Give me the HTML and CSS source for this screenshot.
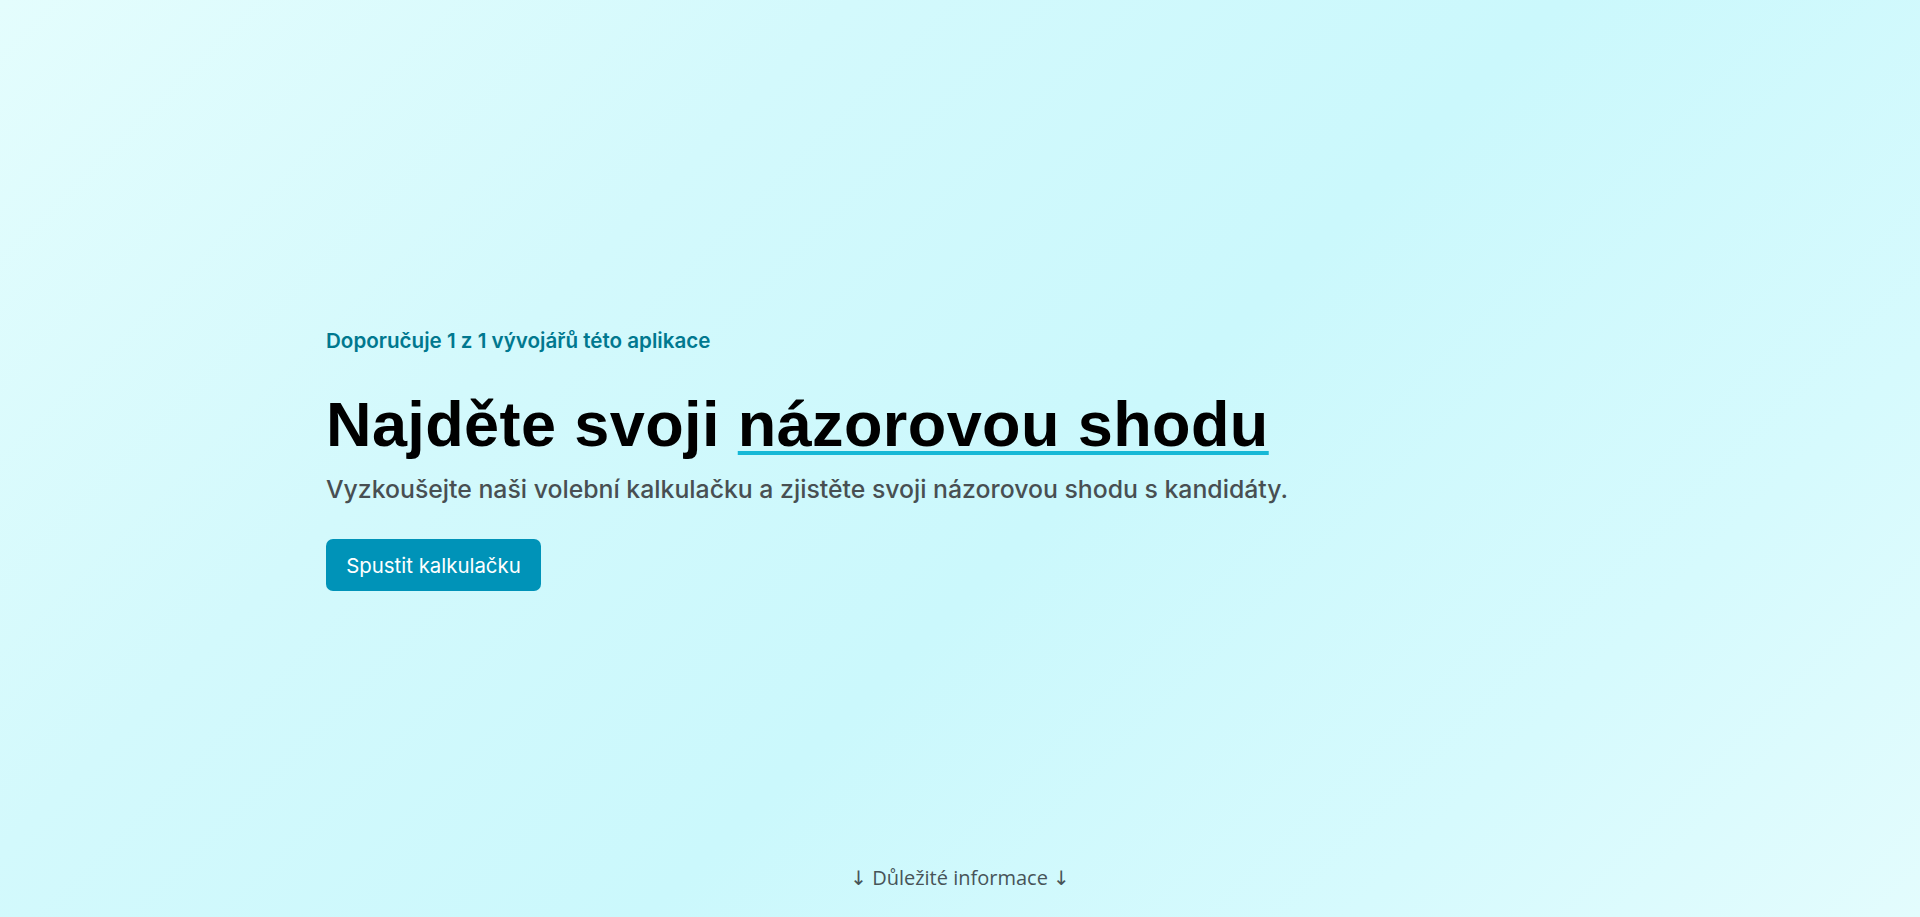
FILE: index.html
```html
<!DOCTYPE html>
<html lang="cs">
<head>
<meta charset="utf-8">
<title>Volební kalkulačka</title>
<link rel="stylesheet" href="styles.css">
</head>
<body>
<main class="page">
  <section class="hero">
    <p class="eyebrow">Doporučuje 1 z 1 vývojářů této aplikace</p>
    <h1 class="title">Najděte svoji <span class="mark">názorovou shodu</span></h1>
    <p class="lead">Vyzkoušejte naši volební kalkulačku a zjistěte svoji názorovou shodu s kandidáty.</p>
    <a class="btn" href="#">Spustit kalkulačku</a>
  </section>
  <footer class="more"><span class="arrow">↓</span> Důležité informace <span class="arrow">↓</span></footer>
</main>
</body>
</html>
```

FILE: styles.css
```css
* { box-sizing: border-box; }
html, body { margin: 0; height: 100%; }
body {
  background: linear-gradient(135deg, #e4fdfd 0%, #d3f9fc 30%, #cbf8fc 55%, #d6fafd 80%, #e3fcfd 100%);
  font-family: "Liberation Sans", Arial, sans-serif;
  color: #000;
}
.page {
  height: 917px;
  display: flex;
  flex-direction: column;
}
.hero {
  flex: 1;
  display: flex;
  flex-direction: column;
  align-items: flex-start;
  padding: 328px 0 0 326px;
}
.eyebrow {
  margin: 0;
  font-family: Inter, sans-serif;
  font-weight: 600;
  font-size: 20.6px;
  color: #00788f;
}
.title {
  margin: 36px 0 0;
  font-family: "Liberation Sans", Arial, sans-serif;
  font-weight: 700;
  font-size: 63px;
  line-height: 70px;
  letter-spacing: 0.4px;
}
.mark {
  text-decoration: underline;
  text-decoration-color: #16b8d6;
  text-decoration-thickness: 4px;
  text-underline-offset: 5px;
}
.lead {
  margin: 15px 0 0;
  font-family: Inter, sans-serif;
  font-weight: 500;
  font-size: 24.8px;
  color: #484f52;
}
.btn {
  margin-top: 35px;
  display: inline-flex;
  align-items: center;
  justify-content: center;
  width: 215px;
  height: 52px;
  border-radius: 7px;
  background: #0093b8;
  color: #fff;
  font-family: Inter, sans-serif;
  font-size: 20.4px;
  text-decoration: none;
}
.more {
  text-align: center;
  padding-bottom: 26px;
  font-family: "Open Sans", sans-serif;
  font-size: 20px;
  color: #475458;
}
.arrow {
  font-family: "DejaVu Sans", sans-serif;
  font-size: 20px;
}
```
